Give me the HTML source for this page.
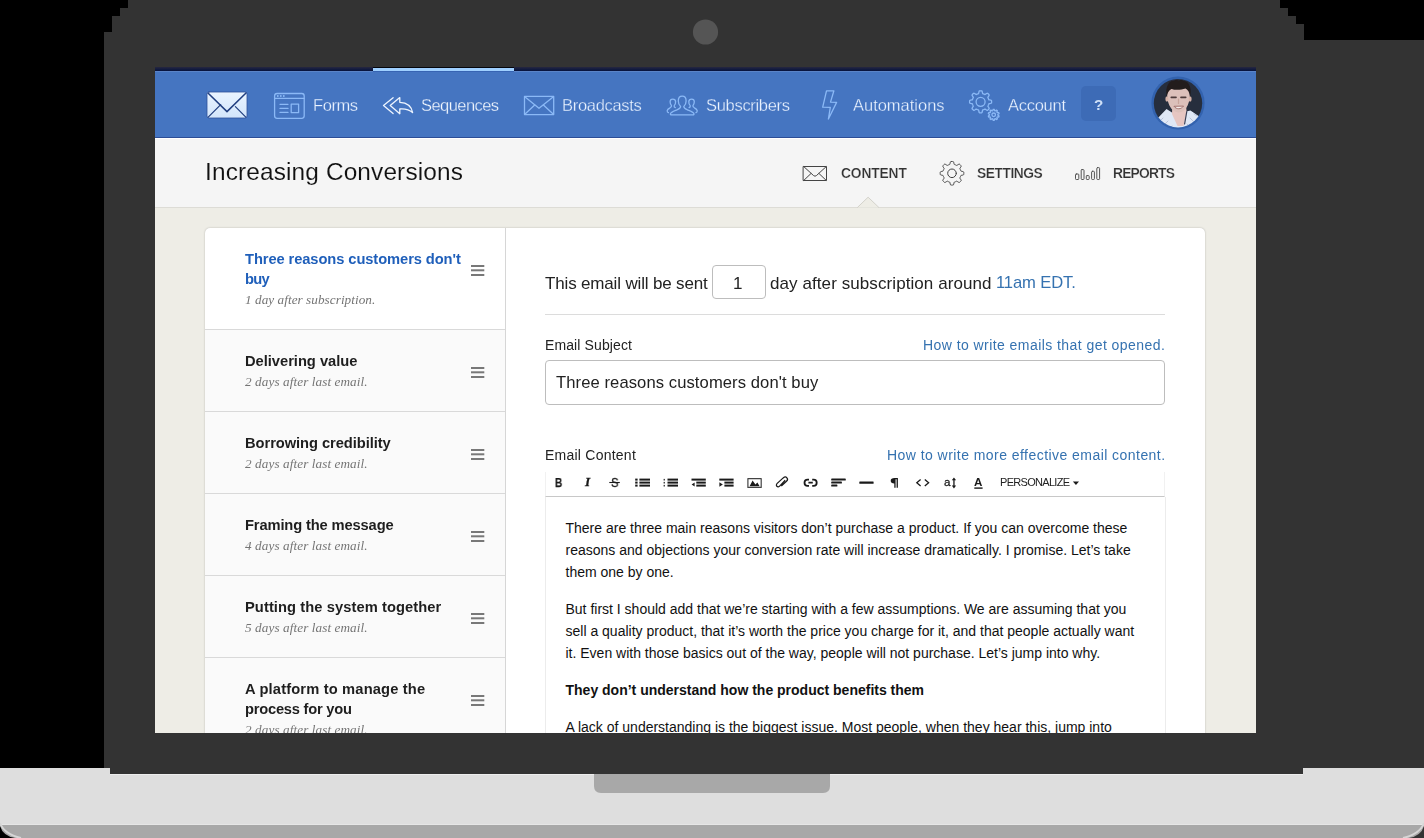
<!DOCTYPE html>
<html lang="en">
<head>
<meta charset="utf-8">
<title>Increasing Conversions</title>
<style>
html,body{margin:0;padding:0;}
body{width:1424px;height:838px;overflow:hidden;background:#000;position:relative;font-family:"Liberation Sans",sans-serif;}
.abs,.t,svg.i{position:absolute;}
.t{white-space:pre;display:block;will-change:transform;}
/* screen */
#screen{left:155px;top:67px;width:1101px;height:666px;background:#eeede6;overflow:hidden;}
#screen .abs,#screen .t,#screen svg.i{margin-left:-155px;margin-top:-67px;}
#topline{left:155px;top:67px;width:1101px;height:4px;background:linear-gradient(#26273f,#04123f);}
#active{left:373px;top:67px;width:141px;height:3px;background:#9fd0ff;border-bottom:1px solid #3764b3;border-top:1px solid #05060c;}
#nav{left:155px;top:71px;width:1101px;height:67px;box-sizing:border-box;background:#4575c1;border-bottom:1px solid #2c4d96;border-top:1px solid #5a84c8;}
#sub{left:155px;top:138px;width:1101px;height:68px;background:#f5f5f5;border-top:1px solid #fff;border-bottom:1px solid #dddcd6;}
#help{left:1081px;top:86px;width:35px;height:35px;border-radius:5px;background:#3d6bb6;}
#card{left:205px;top:228px;width:1000px;height:520px;background:#fff;border-radius:5px 5px 0 0;box-shadow:0 0 2px rgba(0,0,0,.25);}
#side{left:205px;top:228px;width:300px;height:520px;border-right:1px solid #d6d6d6;}
.item{left:205px;width:300px;height:81px;background:#fafafa;border-top:1px solid #d9d9d9;}
.box{background:#fff;border:1px solid #bdbdbd;border-radius:4px;box-sizing:border-box;}
#hr{left:545px;top:314px;width:620px;height:1px;background:#dcdcdc;}
#tb{left:545px;top:472px;width:618px;height:24px;background:#fff;border-left:1px solid #f1f1f1;border-right:1px solid #f1f1f1;border-bottom:1px solid #c8c8c8;}
#ed{left:545px;top:497px;width:619px;height:250px;border-left:1px solid #ececec;border-right:1px solid #ececec;}
#edtext{left:565.5px;top:517px;width:575px;font:400 14px/22px "Liberation Sans",sans-serif;color:#111;}
#edtext p{margin:0 0 15px 0;}
</style>
</head>
<body>
<svg class="abs" style="left:0;top:0" width="1424" height="838" viewBox="0 0 1424 838" shape-rendering="crispEdges">
<path d="M128 0H1280V8H1288V16H1296V24H1304V40H1424V774H104V32H112V16H120V8H128Z" fill="#333"/>
<rect x="0" y="774" width="1424" height="51" fill="#dedede"/>
<rect x="0" y="768" width="110" height="7" fill="#dedede"/>
<rect x="1303" y="768" width="121" height="7" fill="#dedede"/>
<rect x="110" y="774" width="1193" height="1" fill="#ededed"/>
<rect x="0" y="825" width="1424" height="13" fill="#a8a8a8"/>
<rect x="0" y="824" width="1424" height="1" fill="#e6e6e6"/>
<g shape-rendering="auto">
<path d="M594 774H830V786Q830 793 823 793H601Q594 793 594 786Z" fill="#a8a8a8"/>
<circle cx="705.5" cy="32" r="12.6" fill="#555"/>
<path d="M0 826Q3 836 15 838H0Z" fill="#000"/>
<path d="M0 823Q4 834 21 838" fill="none" stroke="#d6d6d6" stroke-width="2"/>
<path d="M1424 826Q1421 836 1409 838H1424Z" fill="#333"/>
<path d="M1424 823Q1420 834 1403 838" fill="none" stroke="#d6d6d6" stroke-width="2"/>
</g>
</svg>
<div class="abs" id="screen">
<div class="abs" id="nav"></div>
<div class="abs" id="topline"></div>
<div class="abs" id="active"></div>
<div class="abs" id="help"></div>
<div class="abs" id="sub"></div>
<div class="abs" id="card"></div>
<div class="abs" id="side"></div>
<div class="abs item" style="top:329px"></div>
<div class="abs item" style="top:411px"></div>
<div class="abs item" style="top:493px"></div>
<div class="abs item" style="top:575px"></div>
<div class="abs item" style="top:657px"></div>
<div class="abs box" style="left:712px;top:265px;width:54px;height:34px"></div>
<div class="abs" id="hr"></div>
<div class="abs box" style="left:545px;top:360px;width:620px;height:45px"></div>
<div class="abs" id="tb"></div>
<div class="abs" id="ed"></div>
<svg class="i" style="left:0;top:0" width="1424" height="838" viewBox="0 0 1424 838" fill="none" stroke-linecap="round" stroke-linejoin="round">
<defs><linearGradient id="lg" x1="0" y1="0" x2="0" y2="1"><stop offset="0" stop-color="#eaf4ff"/><stop offset="1" stop-color="#d2e5fb"/></linearGradient><clipPath id="av"><circle cx="1178" cy="103.2" r="24.2"/></clipPath><filter id="bl" x="-10%" y="-10%" width="120%" height="120%"><feGaussianBlur stdDeviation="0.7"/></filter></defs>
<rect x="207" y="92" width="40" height="26" rx="2" fill="url(#lg)" stroke="#2d529b" stroke-width="0.8"/>
<path d="M208.2 93.2 L227 111.6 L246 93" stroke="#213f80" stroke-width="1.5"/>
<path d="M208.2 117.2 L220.7 104.6 M245.8 117.2 L235.4 106.6" stroke="#213f80" stroke-width="1.2"/>
<g stroke="#8bb9f6" stroke-width="1.3">
<rect x="274.6" y="93.5" width="29.6" height="24.8" rx="2.5"/>
<path d="M274.6 98.3 H304.2"/>
<path d="M280 104.3 H288 M280 108.4 H288 M280 112.4 H288"/>
<rect x="291.2" y="104.2" width="7.4" height="8.4"/>
</g>
<g fill="#8bb9f6"><circle cx="277.8" cy="96" r="0.95"/><circle cx="280.8" cy="96" r="0.95"/><circle cx="283.8" cy="96" r="0.95"/></g>
<g stroke="#eef5ff" stroke-width="1.3">
<path d="M393.1 97.7 L383.5 105.6 L393.1 113.6"/>
<path d="M399.8 97.6 L390.2 105.6 L399.8 113.7 V109 C405.5 108.6 409.5 109.8 412.6 112.6 C411.6 106.6 407 102.6 399.8 102.3 Z"/>
</g>
<g stroke="#8bb9f6" stroke-width="1.3">
<rect x="524.5" y="96.4" width="29.2" height="18.2"/>
<path d="M524.8 96.8 L539 108.3 L553.4 96.8"/>
<path d="M524.8 114.3 L534.7 105 M553.4 114.3 L543.4 105"/>
</g>
<g stroke="#8bb9f6" stroke-width="1.3" transform="translate(660 88)">
<path d="M22.2 8.2 C19.5 8.2 18.3 10.5 18.3 13 C18.3 15.5 19.5 17.5 20.6 18.5 C20.6 20.5 19 21 17 21.8 C13.5 23.2 10.8 24 10.4 25.8 C10.2 26.6 10.8 26.8 11.5 26.8 L32.9 26.8 C33.6 26.8 34.2 26.6 34 25.8 C33.6 24 30.9 23.2 27.4 21.8 C25.4 21 23.8 20.5 23.8 18.5 C24.9 17.5 26.1 15.5 26.1 13 C26.1 10.5 24.9 8.2 22.2 8.2 Z"/>
<path d="M15.3 19.6 C14.3 19.2 13.9 18.6 14.2 17.6 C15.2 16.6 15.7 15.2 15.6 13.6 C15.5 12.0 14.5 11.1 12.8 11.1 C11.1 11.1 10.1 12.2 10.1 13.8 C10.1 15.4 10.6 16.6 11.5 17.6 C11.7 18.8 10.9 19.3 10 19.8 C8.6 20.5 7.4 21.2 7.2 22.6 C7.1 23.6 7.5 24.4 8.4 24.7"/>
<path d="M15.3 19.6 C14.3 19.2 13.9 18.6 14.2 17.6 C15.2 16.6 15.7 15.2 15.6 13.6 C15.5 12.0 14.5 11.1 12.8 11.1 C11.1 11.1 10.1 12.2 10.1 13.8 C10.1 15.4 10.6 16.6 11.5 17.6 C11.7 18.8 10.9 19.3 10 19.8 C8.6 20.5 7.4 21.2 7.2 22.6 C7.1 23.6 7.5 24.4 8.4 24.7" transform="translate(44.4 0) scale(-1 1)"/>
</g>
<path d="M826.5 90.8 H833.9 L830.5 102.1 L836.6 102.4 L828.4 119 L830.3 107.4 L822.7 107.2 Z" stroke="#8bb9f6" stroke-width="1.3"/>
<g stroke="#8bb9f6" stroke-width="1.3">
<path d="M980.60 90.80 L980.96 90.81 L981.32 90.82 L981.68 90.85 L982.01 91.12 L982.25 91.82 L982.42 92.66 L982.56 93.38 L982.77 93.69 L983.04 93.76 L983.30 93.85 L983.56 93.94 L983.81 94.04 L984.07 94.15 L984.32 94.27 L984.56 94.39 L984.80 94.53 L985.17 94.45 L985.78 94.05 L986.49 93.58 L987.16 93.26 L987.58 93.30 L987.85 93.53 L988.12 93.77 L988.38 94.02 L988.63 94.28 L988.87 94.55 L989.10 94.82 L989.14 95.24 L988.82 95.91 L988.35 96.62 L987.95 97.23 L987.87 97.60 L988.01 97.84 L988.13 98.08 L988.25 98.33 L988.36 98.59 L988.46 98.84 L988.55 99.10 L988.64 99.36 L988.71 99.63 L989.02 99.84 L989.74 99.98 L990.58 100.15 L991.28 100.39 L991.55 100.72 L991.58 101.08 L991.59 101.44 L991.60 101.80 L991.59 102.16 L991.58 102.52 L991.55 102.88 L991.28 103.21 L990.58 103.45 L989.74 103.62 L989.02 103.76 L988.71 103.97 L988.64 104.24 L988.55 104.50 L988.46 104.76 L988.36 105.01 L988.25 105.27 L988.13 105.52 L988.01 105.76 L987.87 106.00 L987.95 106.37 L988.35 106.98 L988.82 107.69 L989.14 108.36 L989.10 108.78 L988.87 109.05 L988.63 109.32 L988.38 109.58 L988.12 109.83 L987.85 110.07 L987.58 110.30 L987.16 110.34 L986.49 110.02 L985.78 109.55 L985.17 109.15 L984.80 109.07 L984.56 109.21 L984.32 109.33 L984.07 109.45 L983.81 109.56 L983.56 109.66 L983.30 109.75 L983.04 109.84 L982.77 109.91 L982.56 110.22 L982.42 110.94 L982.25 111.78 L982.01 112.48 L981.68 112.75 L981.32 112.78 L980.96 112.79 L980.60 112.80 L980.24 112.79 L979.88 112.78 L979.52 112.75 L979.19 112.48 L978.95 111.78 L978.78 110.94 L978.64 110.22 L978.43 109.91 L978.16 109.84 L977.90 109.75 L977.64 109.66 L977.39 109.56 L977.13 109.45 L976.88 109.33 L976.64 109.21 L976.40 109.07 L976.03 109.15 L975.42 109.55 L974.71 110.02 L974.04 110.34 L973.62 110.30 L973.35 110.07 L973.08 109.83 L972.82 109.58 L972.57 109.32 L972.33 109.05 L972.10 108.78 L972.06 108.36 L972.38 107.69 L972.85 106.98 L973.25 106.37 L973.33 106.00 L973.19 105.76 L973.07 105.52 L972.95 105.27 L972.84 105.01 L972.74 104.76 L972.65 104.50 L972.56 104.24 L972.49 103.97 L972.18 103.76 L971.46 103.62 L970.62 103.45 L969.92 103.21 L969.65 102.88 L969.62 102.52 L969.61 102.16 L969.60 101.80 L969.61 101.44 L969.62 101.08 L969.65 100.72 L969.92 100.39 L970.62 100.15 L971.46 99.98 L972.18 99.84 L972.49 99.63 L972.56 99.36 L972.65 99.10 L972.74 98.84 L972.84 98.59 L972.95 98.33 L973.07 98.08 L973.19 97.84 L973.33 97.60 L973.25 97.23 L972.85 96.62 L972.38 95.91 L972.06 95.24 L972.10 94.82 L972.33 94.55 L972.57 94.28 L972.82 94.02 L973.08 93.77 L973.35 93.53 L973.62 93.30 L974.04 93.26 L974.71 93.58 L975.42 94.05 L976.03 94.45 L976.40 94.53 L976.64 94.39 L976.88 94.27 L977.13 94.15 L977.39 94.04 L977.64 93.94 L977.90 93.85 L978.16 93.76 L978.43 93.69 L978.64 93.38 L978.78 92.66 L978.95 91.82 L979.19 91.12 L979.52 90.85 L979.88 90.82 L980.24 90.81Z"/>
<circle cx="980.6" cy="101.8" r="4.5"/>
<path d="M993.70 109.30 L993.84 109.30 L993.99 109.31 L994.13 109.32 L994.26 109.43 L994.37 109.68 L994.46 110.01 L994.53 110.34 L994.59 110.60 L994.68 110.72 L994.79 110.74 L994.89 110.77 L995.00 110.81 L995.10 110.84 L995.21 110.88 L995.31 110.92 L995.45 110.88 L995.65 110.70 L995.90 110.48 L996.16 110.26 L996.40 110.12 L996.57 110.11 L996.70 110.19 L996.82 110.27 L996.93 110.35 L997.05 110.44 L997.16 110.53 L997.27 110.62 L997.32 110.78 L997.25 111.05 L997.13 111.37 L996.99 111.68 L996.89 111.93 L996.89 112.07 L996.96 112.16 L997.03 112.24 L997.10 112.33 L997.16 112.42 L997.22 112.51 L997.28 112.61 L997.42 112.65 L997.69 112.64 L998.02 112.60 L998.36 112.58 L998.64 112.60 L998.78 112.70 L998.83 112.83 L998.88 112.96 L998.93 113.10 L998.97 113.24 L999.01 113.38 L999.05 113.52 L998.99 113.68 L998.78 113.86 L998.49 114.04 L998.20 114.21 L997.97 114.35 L997.89 114.47 L997.89 114.58 L997.90 114.69 L997.90 114.80 L997.90 114.91 L997.89 115.02 L997.89 115.13 L997.97 115.25 L998.20 115.39 L998.49 115.56 L998.78 115.74 L998.99 115.92 L999.05 116.08 L999.01 116.22 L998.97 116.36 L998.93 116.50 L998.88 116.64 L998.83 116.77 L998.78 116.90 L998.64 117.00 L998.36 117.02 L998.02 117.00 L997.69 116.96 L997.42 116.95 L997.28 116.99 L997.22 117.09 L997.16 117.18 L997.10 117.27 L997.03 117.36 L996.96 117.44 L996.89 117.53 L996.89 117.67 L996.99 117.92 L997.13 118.23 L997.25 118.55 L997.32 118.82 L997.27 118.98 L997.16 119.07 L997.05 119.16 L996.93 119.25 L996.82 119.33 L996.70 119.41 L996.57 119.49 L996.40 119.48 L996.16 119.34 L995.90 119.12 L995.65 118.90 L995.45 118.72 L995.31 118.68 L995.21 118.72 L995.10 118.76 L995.00 118.79 L994.89 118.83 L994.79 118.86 L994.68 118.88 L994.59 119.00 L994.53 119.26 L994.46 119.59 L994.37 119.92 L994.26 120.17 L994.13 120.28 L993.99 120.29 L993.84 120.30 L993.70 120.30 L993.56 120.30 L993.41 120.29 L993.27 120.28 L993.14 120.17 L993.03 119.92 L992.94 119.59 L992.87 119.26 L992.81 119.00 L992.72 118.88 L992.61 118.86 L992.51 118.83 L992.40 118.79 L992.30 118.76 L992.19 118.72 L992.09 118.68 L991.95 118.72 L991.75 118.90 L991.50 119.12 L991.24 119.34 L991.00 119.48 L990.83 119.49 L990.70 119.41 L990.58 119.33 L990.47 119.25 L990.35 119.16 L990.24 119.07 L990.13 118.98 L990.08 118.82 L990.15 118.55 L990.27 118.23 L990.41 117.92 L990.51 117.67 L990.51 117.53 L990.44 117.44 L990.37 117.36 L990.30 117.27 L990.24 117.18 L990.18 117.09 L990.12 116.99 L989.98 116.95 L989.71 116.96 L989.38 117.00 L989.04 117.02 L988.76 117.00 L988.62 116.90 L988.57 116.77 L988.52 116.64 L988.47 116.50 L988.43 116.36 L988.39 116.22 L988.35 116.08 L988.41 115.92 L988.62 115.74 L988.91 115.56 L989.20 115.39 L989.43 115.25 L989.51 115.13 L989.51 115.02 L989.50 114.91 L989.50 114.80 L989.50 114.69 L989.51 114.58 L989.51 114.47 L989.43 114.35 L989.20 114.21 L988.91 114.04 L988.62 113.86 L988.41 113.68 L988.35 113.52 L988.39 113.38 L988.43 113.24 L988.47 113.10 L988.52 112.96 L988.57 112.83 L988.62 112.70 L988.76 112.60 L989.04 112.58 L989.38 112.60 L989.71 112.64 L989.98 112.65 L990.12 112.61 L990.18 112.51 L990.24 112.42 L990.30 112.33 L990.37 112.24 L990.44 112.16 L990.51 112.07 L990.51 111.93 L990.41 111.68 L990.27 111.37 L990.15 111.05 L990.08 110.78 L990.13 110.62 L990.24 110.53 L990.35 110.44 L990.47 110.35 L990.58 110.27 L990.70 110.19 L990.83 110.11 L991.00 110.12 L991.24 110.26 L991.50 110.48 L991.75 110.70 L991.95 110.88 L992.09 110.92 L992.19 110.88 L992.30 110.84 L992.40 110.81 L992.51 110.77 L992.61 110.74 L992.72 110.72 L992.81 110.60 L992.87 110.34 L992.94 110.01 L993.03 109.68 L993.14 109.43 L993.27 109.32 L993.41 109.31 L993.56 109.30Z"/>
<circle cx="993.7" cy="114.8" r="1.8"/>
</g>
<circle cx="1178" cy="103" r="26.6" fill="#3262ae"/>
<g clip-path="url(#av)"><g filter="url(#bl)">
<rect x="1150" y="76" width="56" height="56" fill="#262d3c"/>
<path d="M1156 120 L1166.5 109 L1172 112.5 L1178 119 L1186 111.5 L1190.5 110.5 L1200 117 L1203 132 L1151 132 Z" fill="#dfe8f6"/>
<path d="M1160 121 l3 -3 M1164 125 l4 -4 M1169 129 l3 -3 M1190 118 l3 3 M1187 124 l4 4 M1194 114 l3 2" stroke="#aebbd6" stroke-width="0.8"/>
<path d="M1172.3 106 L1172 114 L1177.5 126 L1183.5 126 L1186.6 112 L1186 105 Z" fill="#e6c6c2"/>
<path d="M1186.8 111.5 L1184.6 124" stroke="#3a3f55" stroke-width="1.2"/>
<path d="M1167.2 96 C1167 88 1171 84.5 1178.5 84.5 C1186 84.5 1190 88 1189.8 96 C1189.6 103 1186.5 109 1183 111.3 C1180.5 112.8 1177 112.8 1174.5 111.3 C1170.5 109 1167.4 103 1167.2 96 Z" fill="#dcc0ba"/>
<ellipse cx="1166.9" cy="99" rx="1.5" ry="2.8" fill="#d6b2a8"/><ellipse cx="1190.1" cy="99" rx="1.5" ry="2.8" fill="#d6b2a8"/>
<path d="M1166.6 97 C1165 88 1168.5 80 1174 80.8 L1176 79.4 L1178.5 80.6 L1181.5 79.4 L1183.5 80.9 C1189.5 81 1192 88.5 1190.2 97 C1189.6 92.5 1188 90 1185.5 88.6 C1181 90.2 1174.5 90.2 1171.4 89 C1168.8 90.6 1167.4 93 1166.6 97 Z" fill="#241e1f"/>
<path d="M1171.3 97.3 H1176 M1181 97.3 H1185.7" stroke="#4d3a3a" stroke-width="1.7"/>
<path d="M1178.5 99 V103.5" stroke="#c9a59c" stroke-width="1.2"/>
<path d="M1174.2 106.6 C1176.5 109.6 1181 109.6 1183.3 106.4 Z" stroke="#9c6a66" stroke-width="0.9" fill="#f6ecea"/>
</g></g>
<g stroke="#444" stroke-width="1">
<rect x="803.5" y="166.5" width="23" height="14"/>
<path d="M804 166.8 L813.6 175.6 Q815 176.8 816.4 175.6 L826 166.8 M804 180.2 L810.9 173.6 M826 180.2 L819.1 173.6"/>
<path d="M952.00 161.50 L952.39 161.51 L952.77 161.53 L953.16 161.56 L953.51 161.84 L953.77 162.56 L953.96 163.44 L954.13 164.18 L954.36 164.51 L954.64 164.59 L954.93 164.68 L955.21 164.78 L955.48 164.89 L955.76 165.01 L956.02 165.14 L956.29 165.27 L956.55 165.42 L956.94 165.35 L957.58 164.94 L958.34 164.45 L959.04 164.13 L959.49 164.18 L959.78 164.43 L960.07 164.69 L960.34 164.96 L960.61 165.23 L960.87 165.52 L961.12 165.81 L961.17 166.26 L960.85 166.96 L960.36 167.72 L959.95 168.36 L959.88 168.75 L960.03 169.01 L960.16 169.28 L960.29 169.54 L960.41 169.82 L960.52 170.09 L960.62 170.37 L960.71 170.66 L960.79 170.94 L961.12 171.17 L961.86 171.34 L962.74 171.53 L963.46 171.79 L963.74 172.14 L963.77 172.53 L963.79 172.91 L963.80 173.30 L963.79 173.69 L963.77 174.07 L963.74 174.46 L963.46 174.81 L962.74 175.07 L961.86 175.26 L961.12 175.43 L960.79 175.66 L960.71 175.94 L960.62 176.23 L960.52 176.51 L960.41 176.78 L960.29 177.06 L960.16 177.32 L960.03 177.59 L959.88 177.85 L959.95 178.24 L960.36 178.88 L960.85 179.64 L961.17 180.34 L961.12 180.79 L960.87 181.08 L960.61 181.37 L960.34 181.64 L960.07 181.91 L959.78 182.17 L959.49 182.42 L959.04 182.47 L958.34 182.15 L957.58 181.66 L956.94 181.25 L956.55 181.18 L956.29 181.33 L956.02 181.46 L955.76 181.59 L955.48 181.71 L955.21 181.82 L954.93 181.92 L954.64 182.01 L954.36 182.09 L954.13 182.42 L953.96 183.16 L953.77 184.04 L953.51 184.76 L953.16 185.04 L952.77 185.07 L952.39 185.09 L952.00 185.10 L951.61 185.09 L951.23 185.07 L950.84 185.04 L950.49 184.76 L950.23 184.04 L950.04 183.16 L949.87 182.42 L949.64 182.09 L949.36 182.01 L949.07 181.92 L948.79 181.82 L948.52 181.71 L948.24 181.59 L947.98 181.46 L947.71 181.33 L947.45 181.18 L947.06 181.25 L946.42 181.66 L945.66 182.15 L944.96 182.47 L944.51 182.42 L944.22 182.17 L943.93 181.91 L943.66 181.64 L943.39 181.37 L943.13 181.08 L942.88 180.79 L942.83 180.34 L943.15 179.64 L943.64 178.88 L944.05 178.24 L944.12 177.85 L943.97 177.59 L943.84 177.32 L943.71 177.06 L943.59 176.78 L943.48 176.51 L943.38 176.23 L943.29 175.94 L943.21 175.66 L942.88 175.43 L942.14 175.26 L941.26 175.07 L940.54 174.81 L940.26 174.46 L940.23 174.07 L940.21 173.69 L940.20 173.30 L940.21 172.91 L940.23 172.53 L940.26 172.14 L940.54 171.79 L941.26 171.53 L942.14 171.34 L942.88 171.17 L943.21 170.94 L943.29 170.66 L943.38 170.37 L943.48 170.09 L943.59 169.82 L943.71 169.54 L943.84 169.28 L943.97 169.01 L944.12 168.75 L944.05 168.36 L943.64 167.72 L943.15 166.96 L942.83 166.26 L942.88 165.81 L943.13 165.52 L943.39 165.23 L943.66 164.96 L943.93 164.69 L944.22 164.43 L944.51 164.18 L944.96 164.13 L945.66 164.45 L946.42 164.94 L947.06 165.35 L947.45 165.42 L947.71 165.27 L947.98 165.14 L948.24 165.01 L948.52 164.89 L948.79 164.78 L949.07 164.68 L949.36 164.59 L949.64 164.51 L949.87 164.18 L950.04 163.44 L950.23 162.56 L950.49 161.84 L950.84 161.56 L951.23 161.53 L951.61 161.51Z"/>
<circle cx="952" cy="173.3" r="4.3"/>
</g>
<g stroke="#555" stroke-width="1">
<rect x="1075.5" y="174" width="3.3" height="5.5" rx="0.8"/>
<rect x="1081.2" y="169.6" width="2.8" height="9.9" rx="0.8"/>
<rect x="1086.3" y="175.6" width="2.9" height="3.9" rx="0.8"/>
<rect x="1091.6" y="171.3" width="2.8" height="8.2" rx="0.8"/>
<rect x="1096.8" y="167.6" width="2.8" height="11.9" rx="0.8"/>
</g>
<path d="M857.6 207.5 L868.1 197.2 L878.7 207.5 Z" fill="#eeede6" stroke="none"/>
<path d="M857.6 207.3 L868.1 197.2 L878.7 207.3" stroke="#d3d2cb" stroke-width="1"/>
<g fill="#787878" stroke="none">
<rect x="471" y="265.0" width="13.3" height="2"/>
<rect x="471" y="269.3" width="13.3" height="2"/>
<rect x="471" y="274.0" width="13.3" height="2"/>
<rect x="471" y="367.0" width="13.3" height="2"/>
<rect x="471" y="371.3" width="13.3" height="2"/>
<rect x="471" y="376.0" width="13.3" height="2"/>
<rect x="471" y="449.0" width="13.3" height="2"/>
<rect x="471" y="453.3" width="13.3" height="2"/>
<rect x="471" y="458.0" width="13.3" height="2"/>
<rect x="471" y="531.0" width="13.3" height="2"/>
<rect x="471" y="535.3" width="13.3" height="2"/>
<rect x="471" y="540.0" width="13.3" height="2"/>
<rect x="471" y="613.0" width="13.3" height="2"/>
<rect x="471" y="617.3" width="13.3" height="2"/>
<rect x="471" y="622.0" width="13.3" height="2"/>
<rect x="471" y="695.0" width="13.3" height="2"/>
<rect x="471" y="699.3" width="13.3" height="2"/>
<rect x="471" y="704.0" width="13.3" height="2"/>
</g>
<g fill="#1a1a1a" stroke="none">
<rect x="635.2" y="478.6" width="2.4" height="2"/><rect x="639.4" y="478.6" width="10.6" height="2"/>
<rect x="635.2" y="481.6" width="2.4" height="2"/><rect x="639.4" y="481.6" width="10.6" height="2"/>
<rect x="635.2" y="484.6" width="2.4" height="2"/><rect x="639.4" y="484.6" width="10.6" height="2"/>
<rect x="663.6" y="478.90000000000003" width="1.3" height="1.6" fill="#333"/><rect x="667.5" y="478.6" width="10.5" height="2"/>
<rect x="663.6" y="481.90000000000003" width="1.3" height="1.6" fill="#333"/><rect x="667.5" y="481.6" width="10.5" height="2"/>
<rect x="663.6" y="484.90000000000003" width="1.3" height="1.6" fill="#333"/><rect x="667.5" y="484.6" width="10.5" height="2"/>
<rect x="691.5" y="478.6" width="14.3" height="2"/><rect x="696.3" y="481.6" width="9.5" height="2"/><rect x="696.3" y="484.6" width="9.5" height="2"/><path d="M694.6 482.4 V486.4 L691.6 484.4 Z"/>
<rect x="719.3" y="478.6" width="14.3" height="2"/><rect x="724.4" y="481.6" width="9.2" height="2"/><rect x="724.4" y="484.6" width="9.2" height="2"/><path d="M719.4 482.3 V486.7 L722.8 484.5 Z"/>
<path d="M749.6 486.2 L752.6 480.6 L755.4 484.6 L757.4 482.6 L759.6 486.2 Z"/>
<rect x="831.2" y="478.6" width="14.6" height="2" rx="0.6"/><rect x="831.2" y="481.6" width="10.7" height="2" rx="0.6"/><rect x="831.2" y="484.6" width="6.2" height="2" rx="0.6"/>
<rect x="859.3" y="481.6" width="14.3" height="2.1" rx="0.5"/>
<path d="M894.6 478.1 H897.9 V487.7 H896.6 V479.3 H895.6 V487.7 H894.3 V483.6 C892 483.6 890.7 482.6 890.7 480.8 C890.7 479 892 478.1 894.6 478.1 Z"/>
<path d="M953.95 477.4 L956.1 480.2 H954.6 V485.6 H956.1 L953.95 488.4 L951.8 485.6 H953.3 V480.2 H951.8 Z"/>
<rect x="974.3" y="487.4" width="8.3" height="1.4"/>
<path d="M1072.9 481.6 H1079 L1075.95 485 Z"/>
</g>
<g stroke="#1a1a1a">
<rect x="747.9" y="478.6" width="13.3" height="8.8" stroke="#444" stroke-width="1.2"/>
<path d="M785.2 480.2 L779.9 485.9 C778.9 487 777.6 487 776.9 486.3 C776.2 485.6 776.2 484.4 777.2 483.4 L783.2 477.9 C784.5 476.8 786.1 476.9 786.9 477.8 C787.7 478.7 787.7 480.1 786.5 481.2 L781.3 486" stroke-width="1.25" stroke-linecap="butt"/>
<path d="M809 479.6 H807.6 C805.6 479.6 804.5 481 804.5 482.7 C804.5 484.4 805.6 485.8 807.6 485.8 H809 M812.2 479.6 H813.6 C815.6 479.6 816.7 481 816.7 482.7 C816.7 484.4 815.6 485.8 813.6 485.8 H812.2 M808.4 482.7 H812.8" stroke-width="1.8" stroke-linecap="butt"/>
<path d="M920.6 479.6 L916.8 482.8 L920.6 486 M924.8 479.6 L928.6 482.8 L924.8 486" stroke-width="1.3" stroke-linecap="butt" stroke-linejoin="miter"/>
<path d="M609.3 482.5 H619.8" stroke-width="1.1" stroke-linecap="butt"/>
</g>
</svg>
<span class="t" style="left:312.50px;top:96.83px;font:normal 400 16.5px/1 'Liberation Sans', sans-serif;letter-spacing:-0.424px;color:#ecf4ff;-webkit-text-stroke:0.3px #4575c1;">Forms</span>
<span class="t" style="left:421.00px;top:96.83px;font:normal 400 16.5px/1 'Liberation Sans', sans-serif;letter-spacing:-0.564px;color:#f6faff;-webkit-text-stroke:0.3px #4575c1;">Sequences</span>
<span class="t" style="left:562.10px;top:96.83px;font:normal 400 16.5px/1 'Liberation Sans', sans-serif;letter-spacing:-0.299px;color:#ecf4ff;-webkit-text-stroke:0.3px #4575c1;">Broadcasts</span>
<span class="t" style="left:705.80px;top:96.83px;font:normal 400 16.5px/1 'Liberation Sans', sans-serif;letter-spacing:-0.307px;color:#ecf4ff;-webkit-text-stroke:0.3px #4575c1;">Subscribers</span>
<span class="t" style="left:852.70px;top:96.83px;font:normal 400 16.5px/1 'Liberation Sans', sans-serif;letter-spacing:-0.017px;color:#ecf4ff;-webkit-text-stroke:0.3px #4575c1;">Automations</span>
<span class="t" style="left:1007.50px;top:96.83px;font:normal 400 16.5px/1 'Liberation Sans', sans-serif;letter-spacing:-0.272px;color:#ecf4ff;-webkit-text-stroke:0.3px #4575c1;">Account</span>
<span class="t" style="left:1093.90px;top:96.83px;font:normal 700 15.2px/1 'Liberation Sans', sans-serif;letter-spacing:0.000px;color:#cfe0f7;">?</span>
<span class="t" style="left:204.70px;top:159.95px;font:normal 400 24.4px/1 'Liberation Sans', sans-serif;letter-spacing:0.144px;color:#111;-webkit-text-stroke:0.1px #f5f5f5;">Increasing Conversions</span>
<span class="t" style="left:840.60px;top:167.42px;font:normal 700 13.8px/1 'Liberation Sans', sans-serif;letter-spacing:-0.142px;color:#333;-webkit-text-stroke:0.2px #f5f5f5;">CONTENT</span>
<span class="t" style="left:976.80px;top:167.42px;font:normal 700 13.8px/1 'Liberation Sans', sans-serif;letter-spacing:-0.456px;color:#333;-webkit-text-stroke:0.2px #f5f5f5;">SETTINGS</span>
<span class="t" style="left:1113.10px;top:167.42px;font:normal 700 13.8px/1 'Liberation Sans', sans-serif;letter-spacing:-0.799px;color:#333;-webkit-text-stroke:0.2px #f5f5f5;">REPORTS</span>
<span class="t" style="left:244.80px;top:251.76px;font:normal 700 14.7px/1 'Liberation Sans', sans-serif;letter-spacing:-0.084px;color:#1f5fba;">Three reasons customers don't</span>
<span class="t" style="left:244.80px;top:271.56px;font:normal 700 14.7px/1 'Liberation Sans', sans-serif;letter-spacing:-0.672px;color:#1f5fba;">buy</span>
<span class="t" style="left:244.60px;top:293.34px;font:italic 400 13.2px/1 'Liberation Serif', serif;letter-spacing:0.057px;color:#747474;">1 day after subscription.</span>
<span class="t" style="left:244.80px;top:353.66px;font:normal 700 14.7px/1 'Liberation Sans', sans-serif;letter-spacing:-0.019px;color:#1e1e1e;">Delivering value</span>
<span class="t" style="left:244.60px;top:375.35px;font:italic 400 13.2px/1 'Liberation Serif', serif;letter-spacing:0.091px;color:#747474;">2 days after last email.</span>
<span class="t" style="left:244.80px;top:435.66px;font:normal 700 14.7px/1 'Liberation Sans', sans-serif;letter-spacing:-0.056px;color:#1e1e1e;">Borrowing credibility</span>
<span class="t" style="left:244.60px;top:457.35px;font:italic 400 13.2px/1 'Liberation Serif', serif;letter-spacing:0.091px;color:#747474;">2 days after last email.</span>
<span class="t" style="left:244.80px;top:517.66px;font:normal 700 14.7px/1 'Liberation Sans', sans-serif;letter-spacing:-0.130px;color:#1e1e1e;">Framing the message</span>
<span class="t" style="left:244.60px;top:539.35px;font:italic 400 13.2px/1 'Liberation Serif', serif;letter-spacing:0.091px;color:#747474;">4 days after last email.</span>
<span class="t" style="left:244.80px;top:599.66px;font:normal 700 14.7px/1 'Liberation Sans', sans-serif;letter-spacing:0.077px;color:#1e1e1e;">Putting the system together</span>
<span class="t" style="left:244.60px;top:621.35px;font:italic 400 13.2px/1 'Liberation Serif', serif;letter-spacing:0.091px;color:#747474;">5 days after last email.</span>
<span class="t" style="left:244.80px;top:681.66px;font:normal 700 14.7px/1 'Liberation Sans', sans-serif;letter-spacing:0.156px;color:#1e1e1e;">A platform to manage the</span>
<span class="t" style="left:244.80px;top:701.56px;font:normal 700 14.7px/1 'Liberation Sans', sans-serif;letter-spacing:-0.230px;color:#1e1e1e;">process for you</span>
<span class="t" style="left:244.60px;top:723.35px;font:italic 400 13.2px/1 'Liberation Serif', serif;letter-spacing:0.091px;color:#747474;">2 days after last email.</span>
<span class="t" style="left:544.80px;top:274.51px;font:normal 400 17px/1 'Liberation Sans', sans-serif;letter-spacing:-0.162px;color:#222;">This email will be sent</span>
<span class="t" style="left:733.00px;top:274.51px;font:normal 400 17px/1 'Liberation Sans', sans-serif;letter-spacing:0.000px;color:#222;">1</span>
<span class="t" style="left:769.90px;top:274.51px;font:normal 400 17px/1 'Liberation Sans', sans-serif;letter-spacing:0.083px;color:#222;">day after subscription around</span>
<span class="t" style="left:995.80px;top:274.75px;font:normal 400 16.6px/1 'Liberation Sans', sans-serif;letter-spacing:-0.129px;color:#3572b0;">11am EDT.</span>
<span class="t" style="left:544.60px;top:337.65px;font:normal 400 14px/1 'Liberation Sans', sans-serif;letter-spacing:0.108px;color:#222;">Email Subject</span>
<span class="t" style="left:923.10px;top:337.65px;font:normal 400 14px/1 'Liberation Sans', sans-serif;letter-spacing:0.438px;color:#3572b0;">How to write emails that get opened.</span>
<span class="t" style="left:556.00px;top:374.75px;font:normal 400 16.6px/1 'Liberation Sans', sans-serif;letter-spacing:0.085px;color:#222;">Three reasons customers don't buy</span>
<span class="t" style="left:544.60px;top:447.65px;font:normal 400 14px/1 'Liberation Sans', sans-serif;letter-spacing:0.238px;color:#222;">Email Content</span>
<span class="t" style="left:886.80px;top:447.65px;font:normal 400 14px/1 'Liberation Sans', sans-serif;letter-spacing:0.450px;color:#3572b0;">How to write more effective email content.</span>
<span class="t" style="left:999.80px;top:477.49px;font:normal 400 11px/1 'Liberation Sans', sans-serif;letter-spacing:-0.698px;color:#222;">PERSONALIZE</span>
<span class="t" style="left:555.30px;top:476.53px;font:normal 700 12.6px/1 'Liberation Sans', sans-serif;letter-spacing:0.000px;color:#1a1a1a;transform:scaleX(.8);transform-origin:0 0;-webkit-text-stroke:0.25px #1a1a1a;">B</span>
<span class="t" style="left:585.20px;top:475.34px;font:italic 700 13.2px/1 'Liberation Serif', serif;letter-spacing:0.000px;color:#1a1a1a;-webkit-text-stroke:0.3px #1a1a1a;">I</span>
<span class="t" style="left:611.20px;top:476.53px;font:normal 400 12.6px/1 'Liberation Sans', sans-serif;letter-spacing:0.000px;color:#1a1a1a;transform:scaleX(.9);transform-origin:0 0;-webkit-text-stroke:0.3px #1a1a1a;">S</span>
<span class="t" style="left:944.20px;top:476.08px;font:normal 400 11.6px/1 'Liberation Sans', sans-serif;letter-spacing:0.000px;color:#1a1a1a;-webkit-text-stroke:0.3px #1a1a1a;">a</span>
<span class="t" style="left:974.40px;top:476.28px;font:normal 700 11.6px/1 'Liberation Sans', sans-serif;letter-spacing:0.000px;color:#1a1a1a;">A</span>
<div class="abs" id="edtext">
<p>There are three main reasons visitors don’t purchase a product. If you can overcome these reasons and objections your conversion rate will increase dramatically. I promise. Let’s take them one by one.</p>
<p>But first I should add that we’re starting with a few assumptions. We are assuming that you sell a quality product, that it’s worth the price you charge for it, and that people actually want it. Even with those basics out of the way, people will not purchase. Let’s jump into why.</p>
<p><b>They don’t understand how the product benefits them</b></p>
<p>A lack of understanding is the biggest issue. Most people, when they hear this, jump into action and start improving their copy.</p>
</div>
</div>
</body>
</html>
